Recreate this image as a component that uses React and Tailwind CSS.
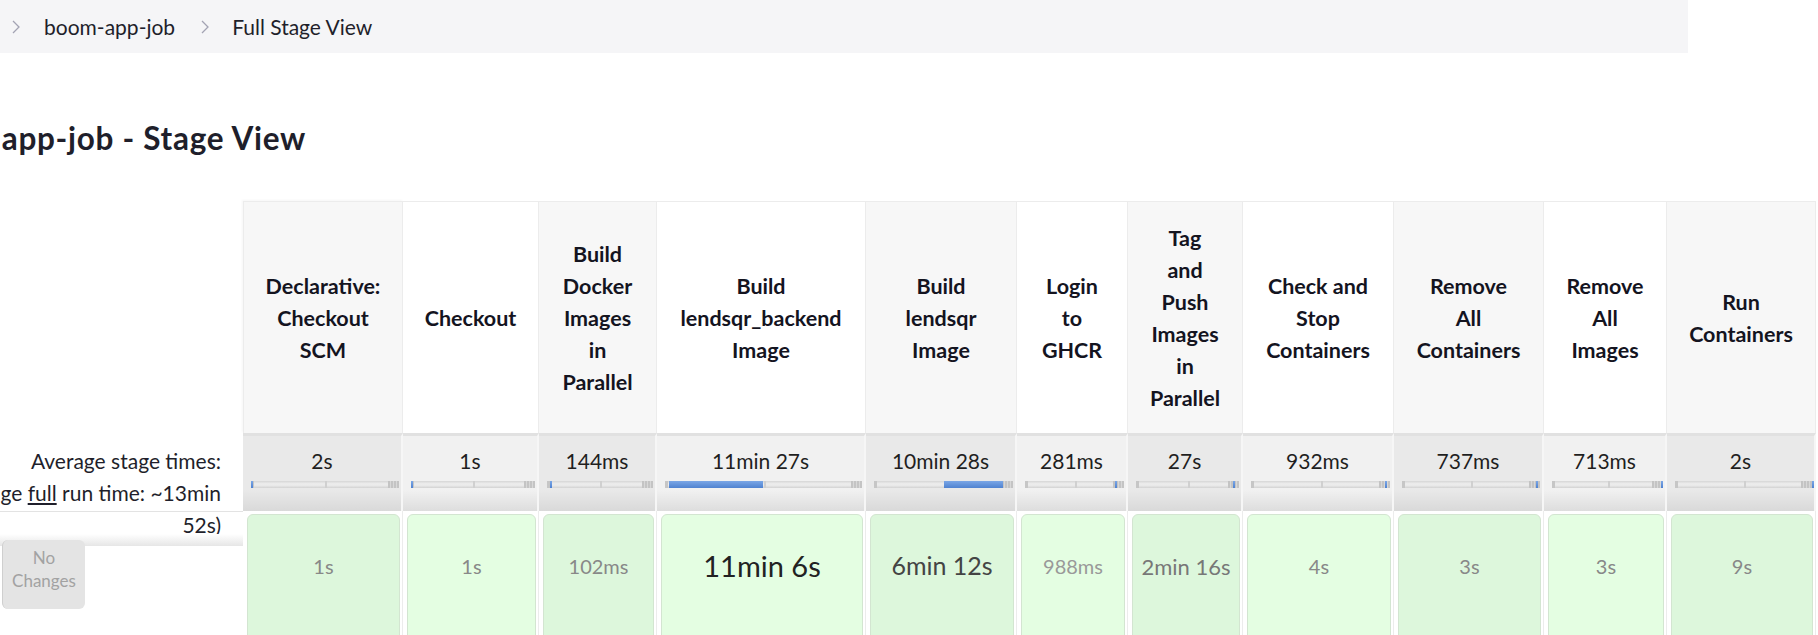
const stages = [
  { lines: ['Declarative:', 'Checkout', 'SCM'], avg: '2s', run: '1s', blue: [0, 2] },
  { lines: ['Checkout'], avg: '1s', run: '1s', blue: [0, 2] },
  { lines: ['Build', 'Docker', 'Images', 'in', 'Parallel'], avg: '144ms', run: '102ms', blue: [3, 2] },
  { lines: ['Build', 'lendsqr_backend', 'Image'], avg: '11min 27s', run: '11min 6s', blue: [4, 94], size: 'text-[29px] text-[#222]' },
  { lines: ['Build', 'lendsqr', 'Image'], avg: '10min 28s', run: '6min 12s', blue: [70, 59], size: 'text-[25px] text-[#444]' },
  { lines: ['Login', 'to', 'GHCR'], avg: '281ms', run: '988ms', blue: [90, 2], size: 'text-[20px] text-[#999]' },
  { lines: ['Tag', 'and', 'Push', 'Images', 'in', 'Parallel'], avg: '27s', run: '2min 16s', blue: [97, 2], size: 'text-[22px] text-[#777]' },
  { lines: ['Check and', 'Stop', 'Containers'], avg: '932ms', run: '4s', blue: [134, 2] },
  { lines: ['Remove', 'All', 'Containers'], avg: '737ms', run: '3s', blue: [134, 2] },
  { lines: ['Remove', 'All', 'Images'], avg: '713ms', run: '3s', blue: [109, 2] },
  { lines: ['Run', 'Containers'], avg: '2s', run: '9s', blue: [137, 2] },
]

function Chevron({ className }) {
  return (
    <svg className={className} width="8" height="14" viewBox="0 0 8 14" fill="none">
      <path d="M1 1l6 6-6 6" stroke="#a3a3b3" strokeWidth="1.3" />
    </svg>
  )
}

function Bar({ blue }) {
  return (
    <div className="relative ml-[8px] mr-[2px] h-[7px] bg-[linear-gradient(to_bottom,#d6d6d6,#ededed_40%,#e9e9e9_65%,#d2d2d2)]">
      <div className="absolute left-0 top-0 h-full w-[3px] bg-[#c6c6c6]" />
      <div className="absolute left-1/2 top-0 h-full w-[2px] bg-[#d0d0d0]" />
      <div className="absolute right-0 top-0 h-full w-[11px] bg-[repeating-linear-gradient(to_right,#c4c4c4_0,#c4c4c4_2px,#d8d8d8_2px,#d8d8d8_3px)]" />
      <div
        className="absolute top-0 h-full bg-[linear-gradient(to_bottom,#7aa6e6,#4f82d0)]"
        style={{ left: blue[0], width: blue[1] }}
      />
    </div>
  )
}

export default function App() {
  return (
    <div className="w-[1818px] h-[635px] overflow-hidden bg-white font-['Lato',sans-serif] text-[#1f1f2b]">
      {/* Breadcrumb */}
      <div className="w-[1688px] h-[53px] bg-[#f5f5f7] flex items-center text-[21px] whitespace-nowrap">
        <Chevron className="ml-[12px]" />
        <span className="ml-[24px]">boom-app-job</span>
        <Chevron className="ml-[26px]" />
        <span className="ml-[23px]">Full Stage View</span>
      </div>

      {/* Heading, scrolled so the start is off the left edge */}
      <div className="mt-[68px] w-[306px] h-[36px] flex items-center justify-end whitespace-nowrap text-[31.5px] tracking-[0.7px] font-bold">
        boom-app-job - Stage View
      </div>

      {/* Stage table */}
      <div className="mt-[44px] grid grid-cols-[243px_160px_136px_118px_209px_151px_111px_115px_151px_150px_123px_149px] grid-rows-[232px_78px_140px]">
        <div />
        {stages.map((s, i) => (
          <div
            key={'h' + i}
            className={`flex flex-col items-center justify-center text-center font-bold text-[21.5px] leading-[32px] text-[#14141f] whitespace-nowrap border-t border-r border-[#ececec] ${i === 0 ? 'border-l shadow-[-1px_-1px_2px_rgba(0,0,0,0.04)]' : ''} ${i % 2 === 0 ? 'bg-[#f7f7f7]' : 'bg-white'}`}
          >
            {s.lines.map((l) => (
              <div key={l}>{l}</div>
            ))}
          </div>
        ))}

        {/* Average row */}
        <div className="flex flex-col items-end pr-[22px] pt-[12px] text-[21px] leading-[32px] whitespace-nowrap">
          <div>Average stage times:</div>
          <div className="flex justify-end w-full">
            <span>
              (Average <span className="underline">full</span> run time: ~13min
            </span>
          </div>
        </div>
        {stages.map((s, i) => (
          <div
            key={'a' + i}
            className={`border-t-[3px] border-t-[#e1e1e1] border-r-2 border-r-[#f6f6f6] ${i % 2 === 0 ? 'bg-[linear-gradient(to_bottom,#e9e9e9_72%,#d9d9d9)]' : 'bg-[linear-gradient(to_bottom,#f1f1f1_72%,#dddddd)]'}`}
          >
            <div className="pt-[11px] h-[45px] text-center text-[21px] leading-[28px] text-[#1f1f1f]">{s.avg}</div>
            <Bar blue={s.blue} />
          </div>
        ))}

        {/* Run row */}
        <div className="border-t border-[#e3e3e3] flex flex-col">
          <div className="h-[22px] pr-[22px] text-right text-[21px] leading-[26px]">52s)</div>
          <div className="h-[12px] bg-[linear-gradient(to_bottom,#ffffff,#e6e6e6)]" />
          <div className="relative -mt-[6px] ml-[2px] w-[83px] h-[69px] rounded-[6px] bg-[#e4e4e4] border-l border-[#cfcfcf] pt-[6px] text-center text-[17px] leading-[23px] text-[#a2a2a2]">
            <div>No</div>
            <div>Changes</div>
          </div>
        </div>
        {stages.map((s, i) => (
          <div key={'r' + i} className="pl-[4px] pr-[2px] pt-[3px] border-r border-[#ececec]">
            <div
              className={`h-[140px] rounded-[6px] border border-[#d3e5d1] ${i % 2 === 0 ? 'bg-[#ddf7dc]' : 'bg-[#e4fee2]'}`}
            >
              <div className={`h-[102px] flex items-center justify-center whitespace-nowrap ${s.size || 'text-[20px] text-[#888]'}`}>
                {s.run}
              </div>
            </div>
          </div>
        ))}
      </div>
    </div>
  )
}
